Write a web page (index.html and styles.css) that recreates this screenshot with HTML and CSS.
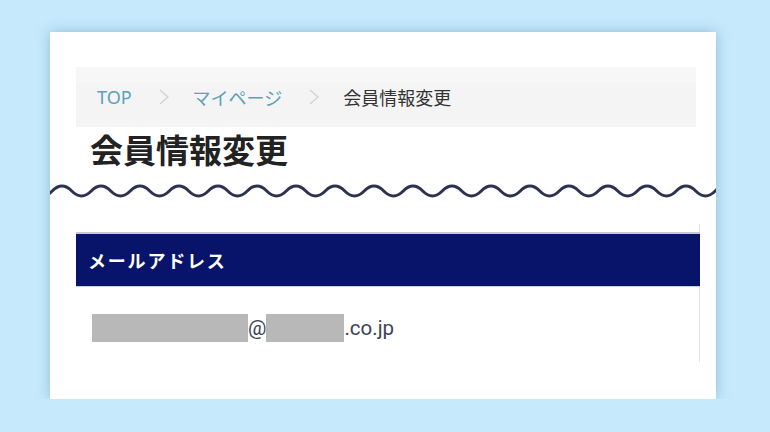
FILE: index.html
```html
<!DOCTYPE html>
<html lang="ja">
<head>
    <meta charset="UTF-8">
    <title>会員情報変更</title>
    <link rel="stylesheet" href="styles.css">
</head>
<body>
    <div class="card">
        <nav class="breadcrumb">
            <a href="/" class="crumb-link">TOP</a>
            <svg class="chev" width="10" height="16" viewBox="0 0 10 16"><polyline points="1,1 9,8 1,15" /></svg>
            <a href="/mypage" class="crumb-link">マイページ</a>
            <svg class="chev" width="10" height="16" viewBox="0 0 10 16"><polyline points="1,1 9,8 1,15" /></svg>
            <span class="crumb-current">会員情報変更</span>
        </nav>
        <h1 class="page-title">会員情報変更</h1>
        <svg class="wave" width="666" height="16" viewBox="0 0 666 16">
            <path d="M-36.75 8 q9.75 -10 19.5 0 t19.5 0 t19.5 0 t19.5 0 t19.5 0 t19.5 0 t19.5 0 t19.5 0 t19.5 0 t19.5 0 t19.5 0 t19.5 0 t19.5 0 t19.5 0 t19.5 0 t19.5 0 t19.5 0 t19.5 0 t19.5 0 t19.5 0 t19.5 0 t19.5 0 t19.5 0 t19.5 0 t19.5 0 t19.5 0 t19.5 0 t19.5 0 t19.5 0 t19.5 0 t19.5 0 t19.5 0 t19.5 0 t19.5 0 t19.5 0 t19.5 0 t19.5 0 t19.5 0" />
        </svg>
        <div class="info-table">
            <div class="info-head">メールアドレス</div>
            <div class="info-body">
                <span class="mask mask-user"></span>@<span class="mask mask-domain"></span>.co.jp
            </div>
        </div>
    </div>
</body>
</html>
```

FILE: styles.css
```css
body {
    margin: 0;
    background-color: #c6e9fb;
    font-family: "Noto Sans", "Noto Sans CJK JP", sans-serif;
}
.card {
    margin: 32px 0 0 50px;
    width: 666px;
    height: 367px;
    box-sizing: border-box;
    padding-top: 35px;
    background-color: white;
    box-shadow: 0 0 12px rgba(40, 110, 150, 0.35);
}
.breadcrumb {
    margin: 0 20px 0 26px;
    height: 60px;
    padding-left: 21px;
    display: flex;
    align-items: center;
    background: linear-gradient(#f7f7f7 0 16px, #f4f4f4 16px);
    font-size: 18px;
}
.crumb-link {
    color: #5aa2b4;
    text-decoration: none;
}
.crumb-current {
    color: #333;
}
.chev {
    margin: 0 24px 0 27px;
}
.chev polyline {
    fill: none;
    stroke: #d2d2d2;
    stroke-width: 1.5;
}
.page-title {
    margin: 2px 0 0 40px;
    font-family: "Noto Sans CJK JP", sans-serif;
    font-size: 33px;
    line-height: 40px;
    font-weight: bold;
    color: #222;
}
.wave {
    display: block;
    margin-top: 14px;
}
.wave path {
    fill: none;
    stroke: #2c3350;
    stroke-width: 3;
}
.info-table {
    margin: 25px 16px 0 26px;
    height: 138px;
    box-sizing: border-box;
    padding-top: 8px;
    border-right: 1px solid #e2e2e2;
}
.info-head {
    margin-right: -1px;
    height: 52px;
    padding-left: 12px;
    display: flex;
    align-items: center;
    border-top: 2px solid #c9c9d2;
    border-bottom: 1px solid #c8cce0;
    background-color: #08146a;
    color: white;
    font-family: "Noto Sans CJK JP", sans-serif;
    font-size: 18px;
    font-weight: bold;
    letter-spacing: 1.8px;
}
.info-body {
    padding: 27px 0 0 16px;
    display: flex;
    align-items: center;
    height: 28px;
    font-family: Roboto, sans-serif;
    font-size: 20.5px;
    color: #3c4254;
}
.mask {
    display: inline-block;
    height: 28px;
    background-color: #b8b8b8;
}
.mask-user {
    width: 156px;
}
.mask-domain {
    width: 78px;
}
```
